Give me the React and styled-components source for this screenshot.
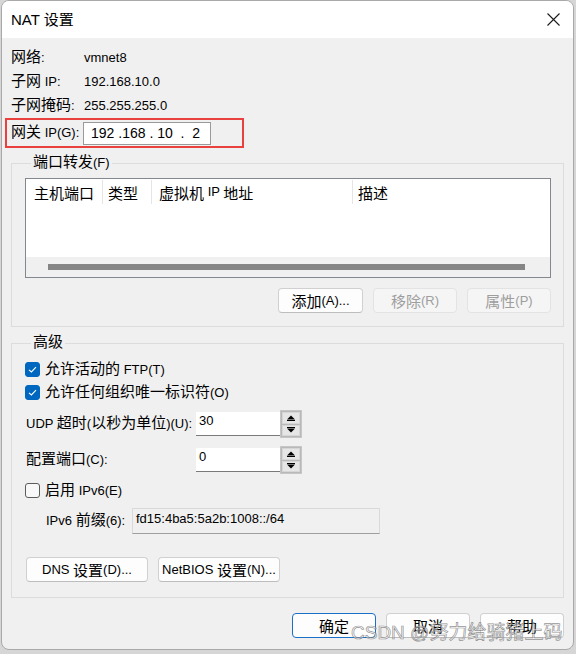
import React from 'react';
import styled, { createGlobalStyle } from 'styled-components';

const Global = createGlobalStyle`
  html, body {
    margin: 0;
    padding: 0;
    background: #d6d6d6;
  }
  body {
    font-family: "Liberation Sans", "Noto Sans CJK SC", sans-serif;
    font-size: 13px;
    color: #000;
  }
`;

const Window = styled.div`
  position: relative;
  box-sizing: border-box;
  width: 573px;
  height: 650px;
  margin-left: 1px;
  border: 1px solid #a9a9a9;
  border-radius: 8px;
  overflow: hidden;
  background: #f0f0f0;
  display: flex;
  flex-direction: column;
  line-height: 20px;
`;

const TitleBar = styled.div`
  height: 37px;
  flex: none;
  background: #fff;
  display: flex;
  align-items: center;
  justify-content: space-between;
  padding: 0 13px 0 9px;
  font-size: 15px;
  font-family: "Liberation Sans", "Noto Sans CJK SC", sans-serif;
`;

const Body = styled.div`
  flex: 1;
  display: flex;
  flex-direction: column;
  padding: 8px 9px 0 9px;
`;

const Han = styled.span`
  font-family: "Noto Sans CJK SC", sans-serif;
  font-size: 15px;
  line-height: 15px;
`;

// CJK runs are drawn a size larger than the latin ones, as the dialog font does
const CJK = /([\u2E80-\u9FFF\uFF00-\uFFEF]+)/;
const Txt = ({ children }) =>
  String(children)
    .split(CJK)
    .map((s, i) => (s ? (CJK.test(s) ? <Han key={i}>{s}</Han> : <span key={i}>{s}</span>) : null));

const InfoRow = styled.div`
  height: 24px;
  display: flex;
  align-items: center;
  white-space: pre;
`;

const InfoLabel = styled.div`
  width: ${(p) => p.$w || 73}px;
  flex: none;
`;

const Highlight = styled.div`
  box-sizing: border-box;
  height: 30px;
  width: 239px;
  margin-left: -6px;
  border: 2px solid #e9413d;
  display: flex;
  align-items: center;
  padding-left: 4px;
`;

const IpField = styled.div`
  box-sizing: border-box;
  width: 128px;
  height: 23px;
  border: 1px solid #9a9a9a;
  background: #fff;
  font-size: 14px;
  line-height: 21px;
  padding-left: 7px;
  white-space: pre;
`;

const Group = styled.fieldset`
  margin: ${(p) => p.$top}px 0 0 0;
  padding: 0 12px ${(p) => p.$bottom}px 13px;
  border: 1px solid #dcdcdc;
  min-width: 0;
  display: flex;
  flex-direction: column;
`;

const Legend = styled.legend`
  margin-left: 6px;
  padding: 0 2px;
  line-height: 20px;
`;

const ListBox = styled.div`
  margin-top: 5px;
  height: 100px;
  box-sizing: border-box;
  border: 1px solid #838790;
  background: #fff;
  display: flex;
  flex-direction: column;
`;

const HeaderRow = styled.div`
  display: flex;
  height: 24px;
  margin-top: 1px;
`;

const HeaderCell = styled.div`
  box-sizing: border-box;
  width: ${(p) => (p.$w ? `${p.$w}px` : 'auto')};
  flex: ${(p) => (p.$w ? 'none' : '1')};
  padding-left: ${(p) => p.$pad}px;
  border-right: ${(p) => (p.$w ? '1px solid #e5e5e5' : 'none')};
  display: flex;
  align-items: center;
  white-space: pre;
`;

const HScroll = styled.div`
  margin-top: auto;
  height: 20px;
  background: #f0f0f0;
  display: flex;
  align-items: center;
`;

const Thumb = styled.div`
  margin-left: 22px;
  width: 477px;
  height: 6px;
  background: #858585;
`;

const ButtonRow = styled.div`
  display: flex;
  justify-content: ${(p) => p.$align || 'flex-end'};
  gap: 10px;
  margin-top: ${(p) => p.$top}px;
  margin-left: ${(p) => p.$left || 0}px;
`;

const Button = styled.div`
  box-sizing: border-box;
  width: ${(p) => p.$w || 84}px;
  height: 25px;
  border-radius: 4px;
  border: 1px solid ${(p) => (p.$primary ? '#1a6fc7' : p.$disabled ? '#e3e3e3' : '#d0d0d0')};
  border-bottom-color: ${(p) => (p.$primary ? '#1a6fc7' : p.$disabled ? '#e3e3e3' : '#bdbdbd')};
  background: ${(p) => (p.$disabled ? '#f5f5f5' : '#fdfdfd')};
  color: ${(p) => (p.$disabled ? '#9e9e9e' : '#000')};
  display: flex;
  align-items: center;
  justify-content: center;
  white-space: pre;
`;

const CheckRow = styled.div`
  height: 23px;
  margin-top: ${(p) => p.$top || 0}px;
  display: flex;
  align-items: center;
  gap: 5px;
`;

const Box = styled.div`
  box-sizing: border-box;
  width: 15px;
  height: 15px;
  border-radius: 3px;
  background: ${(p) => (p.$checked ? '#0067c0' : '#f8f8f8')};
  border: 1px solid ${(p) => (p.$checked ? '#0067c0' : '#5c5c5c')};
  display: flex;
  align-items: center;
  justify-content: center;
`;

const FieldRow = styled.div`
  display: flex;
  align-items: center;
  margin-top: ${(p) => p.$top}px;
  height: ${(p) => p.$h}px;
`;

const FieldLabel = styled.div`
  box-sizing: border-box;
  width: ${(p) => p.$w}px;
  padding-left: ${(p) => p.$pad}px;
  flex: none;
  white-space: pre;
`;

const SpinField = styled.div`
  box-sizing: border-box;
  width: 84px;
  height: 24px;
  background: #fff;
  border-bottom: 1px solid #7a7a7a;
  padding: 0 3px;
  line-height: 18px;
`;

const Spin = styled.div`
  box-sizing: border-box;
  width: 22px;
  height: 28px;
  border: 1px solid #c6c6c6;
  padding: 1px;
  display: flex;
  flex-direction: column;
  gap: 1px;
  background: #b9b9b9;
`;

const SpinBtn = styled.div`
  flex: 1;
  background: #e6e6e6;
  border: 1px solid #d6d6d6;
  display: flex;
  align-items: center;
  justify-content: center;
`;

const PrefixField = styled.div`
  box-sizing: border-box;
  width: 248px;
  height: 26px;
  background: #f0f0f0;
  border: 1px solid #d9d9d9;
  border-bottom-color: #a0a0a0;
  padding: 1px 3px;
  line-height: 18px;
`;

const Footer = styled.div`
  display: flex;
  justify-content: flex-end;
  gap: 10px;
  margin-top: 15px;
`;

const Watermark = styled.div`
  position: absolute;
  left: 349px;
  top: 619px;
  font-family: "Liberation Sans", "Noto Sans CJK SC", sans-serif;
  font-size: 19px;
  line-height: 26px;
  white-space: pre;
  color: rgba(255, 255, 255, 0.55);
  -webkit-text-stroke: 0.7px rgba(110, 110, 110, 0.75);
  pointer-events: none;
`;

const CloseIcon = () => (
  <svg width="13" height="13" viewBox="0 0 13 13">
    <path d="M0.5 0.5 L12.5 12.5 M12.5 0.5 L0.5 12.5" stroke="#1a1a1a" strokeWidth="1.1" fill="none" />
  </svg>
);

const Tick = () => (
  <svg width="11" height="11" viewBox="0 0 11 11">
    <path d="M2 5.8 L4.4 8 L9 3.2" stroke="#fff" strokeWidth="1.1" fill="none" />
  </svg>
);

const Arrow = ({ down }) => (
  <svg width="10" height="6" viewBox="0 0 10 6">
    {down ? (
      <>
        <rect x="1" y="0" width="8" height="1" fill="#000" />
        <path d="M1 1.5 H9 L5 5.5 Z" fill="#000" />
      </>
    ) : (
      <>
        <path d="M5 0.5 L9 4.5 H1 Z" fill="#000" />
        <rect x="1" y="5" width="8" height="1" fill="#000" />
      </>
    )}
  </svg>
);

const SpinBox = ({ value }) => (
  <>
    <SpinField>{value}</SpinField>
    <Spin>
      <SpinBtn>
        <Arrow />
      </SpinBtn>
      <SpinBtn>
        <Arrow down />
      </SpinBtn>
    </Spin>
  </>
);

const info = [
  ['网络:', 'vmnet8'],
  ['子网 IP:', '192.168.10.0'],
  ['子网掩码:', '255.255.255.0'],
];

const columns = [
  { label: '主机端口', w: 77, pad: 8 },
  { label: '类型', w: 49, pad: 5 },
  { label: '虚拟机 IP 地址', w: 201, pad: 7 },
  { label: '描述', pad: 5 },
];

const App = () => (
  <>
    <Global />
    <Window>
      <TitleBar>
        <span>NAT 设置</span>
        <CloseIcon />
      </TitleBar>
      <Body>
        {info.map(([k, v]) => (
          <InfoRow key={k}>
            <InfoLabel>
              <Txt>{k}</Txt>
            </InfoLabel>
            <span>{v}</span>
          </InfoRow>
        ))}
        <Highlight>
          <InfoLabel $w={72}>
            <Txt>网关 IP(G):</Txt>
          </InfoLabel>
          <IpField>{'192 .168 . 10  .  2'}</IpField>
        </Highlight>

        <Group $top={5} $bottom={13}>
          <Legend>
            <Txt>端口转发(F)</Txt>
          </Legend>
          <ListBox>
            <HeaderRow>
              {columns.map((c) => (
                <HeaderCell key={c.label} $w={c.w} $pad={c.pad}>
                  <Txt>{c.label}</Txt>
                </HeaderCell>
              ))}
            </HeaderRow>
            <HScroll>
              <Thumb />
            </HScroll>
          </ListBox>
          <ButtonRow $top={10}>
            <Button $w={85}>
              <Txt>添加(A)...</Txt>
            </Button>
            <Button $disabled>
              <Txt>移除(R)</Txt>
            </Button>
            <Button $disabled>
              <Txt>属性(P)</Txt>
            </Button>
          </ButtonRow>
        </Group>

        <Group $top={6} $bottom={15}>
          <Legend>
            <Txt>高级</Txt>
          </Legend>
          <CheckRow $top={5}>
            <Box $checked>
              <Tick />
            </Box>
            <span>
              <Txt>允许活动的 FTP(T)</Txt>
            </span>
          </CheckRow>
          <CheckRow>
            <Box $checked>
              <Tick />
            </Box>
            <span>
              <Txt>允许任何组织唯一标识符(O)</Txt>
            </span>
          </CheckRow>
          <FieldRow $top={6} $h={28}>
            <FieldLabel $w={171} $pad={1}>
              <Txt>UDP 超时(以秒为单位)(U):</Txt>
            </FieldLabel>
            <SpinBox value="30" />
          </FieldRow>
          <FieldRow $top={8} $h={28}>
            <FieldLabel $w={171} $pad={1}>
              <Txt>配置端口(C):</Txt>
            </FieldLabel>
            <SpinBox value="0" />
          </FieldRow>
          <CheckRow $top={5}>
            <Box />
            <span>
              <Txt>启用 IPv6(E)</Txt>
            </span>
          </CheckRow>
          <FieldRow $top={6} $h={26}>
            <FieldLabel $w={107} $pad={21}>
              <Txt>IPv6 前缀(6):</Txt>
            </FieldLabel>
            <PrefixField>fd15:4ba5:5a2b:1008::/64</PrefixField>
          </FieldRow>
          <ButtonRow $top={23} $align="flex-start" $left={1}>
            <Button $w={122}>
              <Txt>DNS 设置(D)...</Txt>
            </Button>
            <Button $w={122}>
              <Txt>NetBIOS 设置(N)...</Txt>
            </Button>
          </ButtonRow>
        </Group>

        <Footer>
          <Button $primary>
            <Txt>确定</Txt>
          </Button>
          <Button>
            <Txt>取消</Txt>
          </Button>
          <Button>
            <Txt>帮助</Txt>
          </Button>
        </Footer>
      </Body>
      <Watermark>CSDN @努力给骑猪上码</Watermark>
    </Window>
  </>
);

export default App;
